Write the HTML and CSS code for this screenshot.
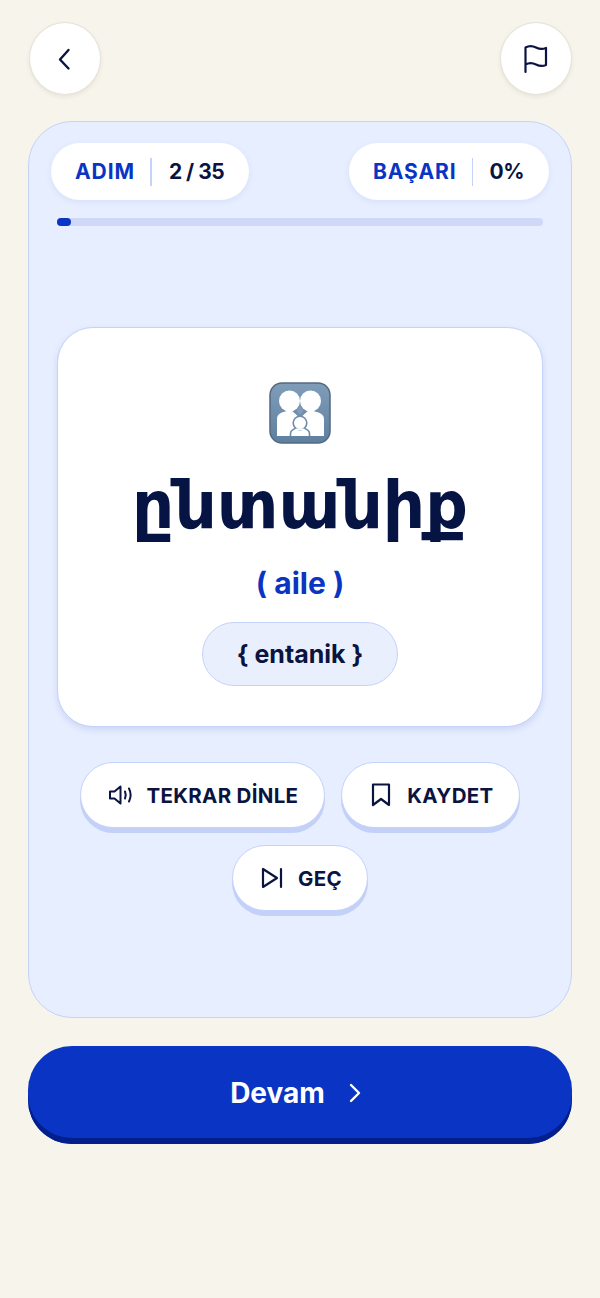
FILE: index.html
```html
<!DOCTYPE html>
<html lang="tr">
<head>
    <meta charset="UTF-8">
    <meta name="viewport" content="width=device-width, initial-scale=1.0">
    <title>Adım 2 / 35</title>
    <link rel="stylesheet" href="styles.css">
</head>
<body>
    <div class="page">
        <div class="topbar">
            <button class="round-btn" type="button" aria-label="Geri">
                <svg width="28" height="28" viewBox="0 0 28 28" fill="none" stroke="#0b1440" stroke-width="2.4" stroke-linecap="round" stroke-linejoin="round"><path d="M17.5 5L9 14.5l8.500 9"/></svg>
            </button>
            <button class="round-btn" type="button" aria-label="Bildir">
                <svg width="28" height="32" viewBox="0 0 28 32" fill="none" stroke="#0b1440" stroke-width="2.2" stroke-linecap="round" stroke-linejoin="round"><path d="M3.500 29V4.500c3.500-2 7-1.800 10.500 0s7 1.800 10 .5v17c-3 1.300-6.500 1.300-10-.5s-7-2-10.500 0"/></svg>
            </button>
        </div>

        <div class="panel">
            <div class="stats">
                <div class="pill">
                    <span class="pill-label">ADIM</span>
                    <span class="pill-sep pill-sep-wide"></span>
                    <span class="pill-value">2 / 35</span>
                </div>
                <div class="pill">
                    <span class="pill-label">BAŞARI</span>
                    <span class="pill-sep"></span>
                    <span class="pill-value">0%</span>
                </div>
            </div>

            <div class="progress"><div class="progress-fill" style="width: 2.8%"></div></div>

            <div class="card">
                <svg class="family-icon" width="62" height="62" viewBox="0 0 62 62">
                    <defs>
                        <linearGradient id="tile" x1="0" y1="0" x2="0" y2="1">
                            <stop offset="0" stop-color="#7f9db9"/>
                            <stop offset="1" stop-color="#5f7f9f"/>
                        </linearGradient>
                    </defs>
                    <rect x="1" y="1" width="60" height="60" rx="12" fill="url(#tile)" stroke="#54697f" stroke-width="1.500"/>
                    <circle cx="20.500" cy="19" r="10.500" fill="#fff"/>
                    <circle cx="41.500" cy="19" r="10.500" fill="#fff"/>
                    <path d="M8 54V37c0-4.500 3.500-6.500 8-7.500l6-1.500 9 8 9-8 6 1.500c5 1 9 3 9 7.500v17z" fill="#fff"/>
                    <path d="M31 24l3.500 4.500-3.500 5-3.500-5z" fill="#7f9db9"/>
                    <path d="M21.500 54v-2.500c0-3 3-4.500 6-5.500h7c3 1 6 2.500 6 5.500V54" fill="#fff" stroke="#6f8dab" stroke-width="1.600"/>
                    <circle cx="31" cy="41" r="6.800" fill="#fff" stroke="#6f8dab" stroke-width="1.600"/>
                    <path d="M27 46.500h8l1 1.500h-10z" fill="#fff"/>
                </svg>
                <div class="word">ընտանիք</div>
                <div class="meaning">( aile )</div>
                <div class="reading">{ entanik }</div>
            </div>

            <div class="actions">
                <button class="action-btn" type="button">
                    <svg width="28" height="28" viewBox="0 0 28 28" fill="none" stroke="#0b1440" stroke-width="2" stroke-linecap="round" stroke-linejoin="round"><path d="M3 10.500v7h4.500l6 5V5.500l-6 5z"/><path d="M18 10.500c1 2.300 1 4.700 0 7"/><path d="M22 7.500c2 4 2 9 0 13"/></svg>
                    TEKRAR DİNLE
                </button>
                <button class="action-btn" type="button">
                    <svg width="28" height="28" viewBox="0 0 28 28" fill="none" stroke="#0b1440" stroke-width="2.200" stroke-linecap="round" stroke-linejoin="round"><path d="M6 3.500h16V24l-8-6-8 6z"/></svg>
                    KAYDET
                </button>
                <button class="action-btn" type="button">
                    <svg width="28" height="28" viewBox="0 0 28 28" fill="none" stroke="#0b1440" stroke-width="2.200" stroke-linecap="round" stroke-linejoin="round"><path d="M5 5v18l14-9z"/><path d="M23 5v18"/></svg>
                    GEÇ
                </button>
            </div>
        </div>

        <button class="continue-btn" type="button">
            Devam
            <svg width="20" height="24" viewBox="0 0 20 24" fill="none" stroke="#fff" stroke-width="2.400" stroke-linecap="round" stroke-linejoin="round"><path d="M6 4l8 8-8 8"/></svg>
        </button>
    </div>
</body>
</html>
```

FILE: styles.css
```css
* {
    box-sizing: border-box;
}
body {
    margin: 0;
    background-color: #f7f4ec;
    font-family: Inter, "Noto Sans", "DejaVu Sans", sans-serif;
    color: #0b1440;
}
button {
    font-family: inherit;
    cursor: pointer;
}
.page {
    padding: 22px 28px 0;
}
.topbar {
    display: flex;
    justify-content: space-between;
    padding: 0 .5px;
}
.round-btn {
    width: 72px;
    height: 73px;
    padding: 0;
    border-radius: 50%;
    border: 1px solid #e6e2d8;
    background-color: #fff;
    box-shadow: 0 2px 4px rgba(60, 50, 30, 0.08);
    display: flex;
    align-items: center;
    justify-content: center;
}
.panel {
    margin-top: 26px;
    height: 897px;
    padding: 21px 22px 0;
    border: 1px solid #c5d2fa;
    border-radius: 44px;
    background-color: #e7eeff;
}
.stats {
    display: flex;
    justify-content: space-between;
}
.pill {
    height: 57px;
    padding: 0 25px 0 24px;
    display: flex;
    align-items: center;
    border-radius: 29px;
    background-color: #fff;
    box-shadow: 0 2px 6px rgba(80, 110, 200, 0.1);
    font-size: 21px;
    font-weight: 700;
}
.pill-label {
    color: #0a34c4;
    letter-spacing: 0.9px;
}
.pill-value {
    letter-spacing: -0.5px;
}
.pill-sep {
    width: 1px;
    height: 28px;
    margin: 0 17px 0 15px;
    background-color: #c5d2fa;
}
.pill-sep-wide {
    width: 2px;
}
.progress {
    margin: 18px 6px 0;
    height: 8px;
    border-radius: 4px;
    background-color: #cfd8f6;
}
.progress-fill {
    height: 100%;
    border-radius: 4px;
    background-color: #0a34c4;
}
.card {
    margin: 101px 6px 0;
    height: 400px;
    padding-top: 54px;
    display: flex;
    flex-direction: column;
    align-items: center;
    border: 1px solid #c5d2fa;
    border-radius: 36px;
    background-color: #fff;
    box-shadow: 0 3px 6px rgba(80, 110, 200, 0.18);
}
.family-icon {
    display: block;
}
.word {
    margin-top: 16px;
    font-family: "Noto Sans", "DejaVu Sans", sans-serif;
    font-size: 66px;
    line-height: 84px;
    font-weight: 700;
    color: #061444;
}
.meaning {
    margin-top: 21px;
    font-size: 30px;
    line-height: 36px;
    font-weight: 700;
    color: #0a34c4;
}
.reading {
    margin-top: 21px;
    width: 196px;
    height: 64px;
    display: flex;
    align-items: center;
    justify-content: center;
    border: 1px solid #c5d2fa;
    border-radius: 32px;
    background-color: #e9effd;
    font-size: 25px;
    font-weight: 700;
}
.actions {
    margin-top: 35px;
    display: flex;
    flex-wrap: wrap;
    justify-content: center;
    gap: 17px 16px;
}
.action-btn {
    height: 66px;
    padding: 0 25.500px;
    display: flex;
    align-items: center;
    gap: 12px;
    border: 1px solid #c5d2fa;
    border-radius: 33px;
    background-color: #fff;
    box-shadow: 0 5px 0 #c3d0f8;
    color: #0b1440;
    font-size: 20.500px;
    letter-spacing: 0.3px;
    font-weight: 700;
}
.continue-btn {
    margin-top: 28px;
    width: 100%;
    height: 98px;
    display: flex;
    align-items: center;
    justify-content: center;
    gap: 20px;
    padding: 0 5px 4px 0;
    border: none;
    border-radius: 44px;
    background-color: #0a34c4;
    box-shadow: inset 0 -6px 0 #021f8c;
    color: #fff;
    font-size: 28px;
    font-weight: 700;
}
```
